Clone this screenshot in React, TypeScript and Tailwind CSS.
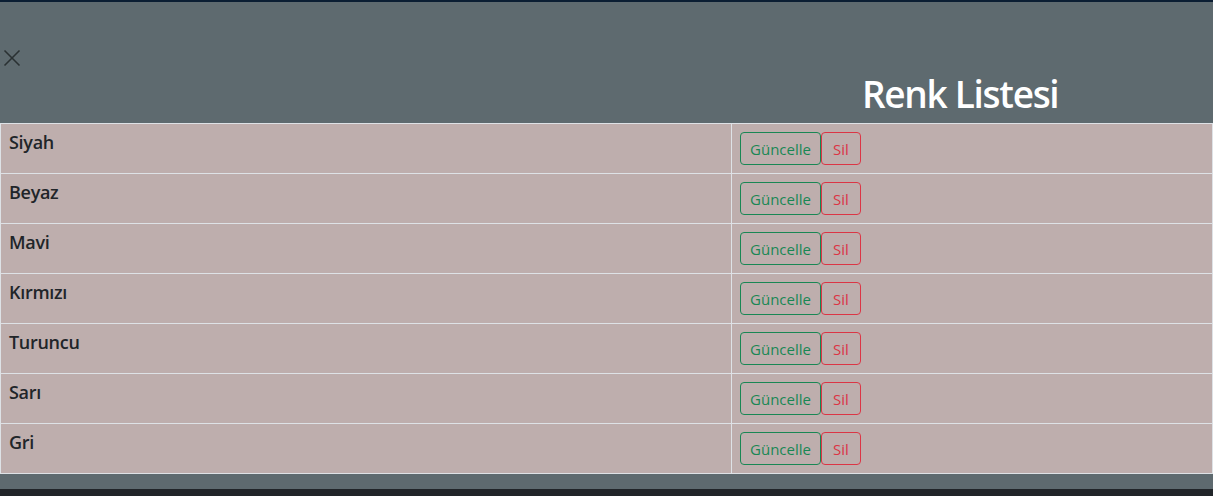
import React from 'react';

const colors = ['Siyah', 'Beyaz', 'Mavi', 'Kırmızı', 'Turuncu', 'Sarı', 'Gri'];

export default function App() {
  return (
    <div
      className="min-h-screen bg-[#212529] text-[#212529]"
      style={{ fontFamily: '"Open Sans", "Noto Sans", sans-serif' }}
    >
      <div className="border-t-2 border-[#0b1e33] bg-[#5e6a6f] pb-[15px]">
        {/* Header */}
        <div className="relative h-[121px]">
          <button className="absolute left-[3px] top-[47px] p-0">
            <svg width="18" height="18" viewBox="0 0 18 18" className="text-[#2a3133]">
              <line x1="1.5" y1="1.5" x2="16.5" y2="16.5" stroke="currentColor" strokeWidth="1.6" />
              <line x1="16.5" y1="1.5" x2="1.5" y2="16.5" stroke="currentColor" strokeWidth="1.6" />
            </svg>
          </button>
          <h1 className="absolute bottom-[5px] left-[862px] m-0 text-[37px] font-semibold leading-[48px] tracking-[-1.3px] text-white">
            Renk Listesi
          </h1>
        </div>

        {/* Table */}
        <table className="w-full border-collapse bg-[#beaead]">
          <tbody>
            {colors.map((c) => (
              <tr key={c} className="border-y border-[#dee2e6]">
                <td className="w-[731px] border-x border-[#dee2e6] px-2 py-2 align-top">
                  <h5 className="m-0 text-[18px] font-semibold leading-[20px] tracking-[-0.3px] text-[#212529]">
                    {c}
                  </h5>
                </td>
                <td className="border-x border-[#dee2e6] px-2 py-2 align-top">
                  <div className="flex">
                    <button className="h-[33px] w-[81px] rounded-[4px] border border-[#198754] text-[15px] leading-[24px] text-[#198754]">
                      Güncelle
                    </button>
                    <button className="h-[33px] w-[40px] rounded-[4px] border border-[#dc3545] text-[15px] leading-[24px] text-[#dc3545]">
                      Sil
                    </button>
                  </div>
                </td>
              </tr>
            ))}
          </tbody>
        </table>
      </div>
    </div>
  );
}
